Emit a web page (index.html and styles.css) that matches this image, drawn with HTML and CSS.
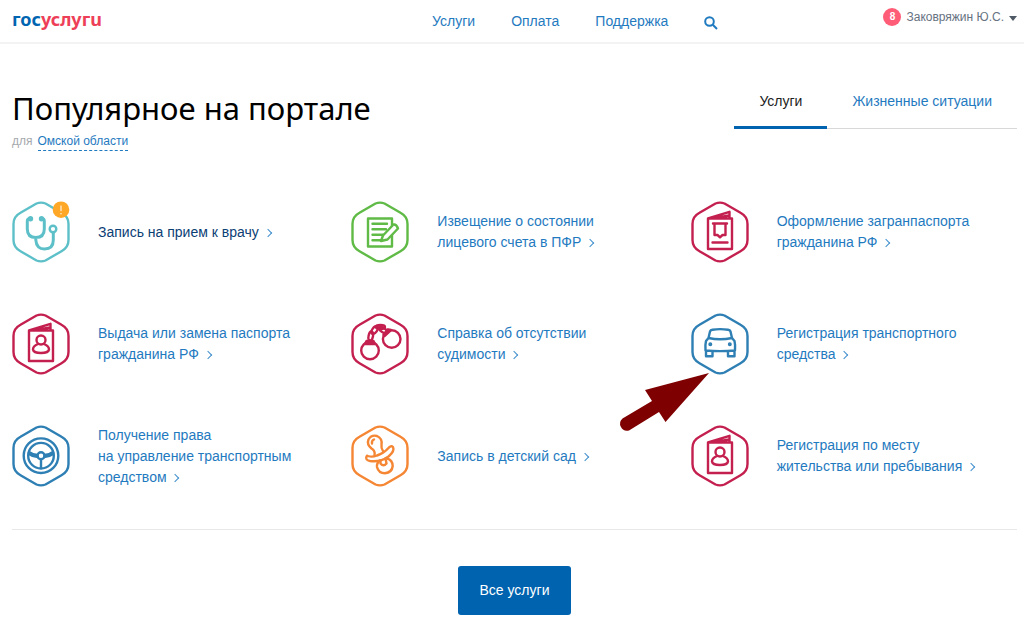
FILE: index.html
```html
<!DOCTYPE html>
<html lang="ru">
<head>
<meta charset="utf-8">
<title>Госуслуги</title>
<link rel="stylesheet" href="styles.css">
</head>
<body>
<svg class="sprite" aria-hidden="true">
  <symbol id="hex" viewBox="0 0 58 62">
    <path d="M24.500 2.500Q29 .7 33.500 2.500L49.500 11.800Q56.500 15.500 56.500 23V39Q56.500 46.500 49.500 50.200L33.500 59.500Q29 61.300 24.500 59.500L8.500 50.200Q1.500 46.500 1.500 39V23Q1.500 15.500 8.500 11.800Z"/>
  </symbol>
  <symbol id="passport" viewBox="0 0 58 62">
    <path d="M17 17.500H41V48H17ZM17 17.500L38.500 10.800V17.500M27 16.500L38 14.500"/>
    <circle cx="29" cy="27" r="4.500"/>
    <path d="M26 31Q21 33 21 36.500Q21.500 40 29 40Q36.500 40 37 36.500Q37 33 32 31"/>
  </symbol>
</svg>

<header class="header">
  <a class="logo" href="#" aria-label="Госуслуги"><span class="logo-blue">гос</span><span class="logo-red">услугu</span></a>
  <nav class="nav">
    <a href="#">Услуги</a>
    <a href="#">Оплата</a>
    <a href="#">Поддержка</a>
    <button class="search" type="button" aria-label="Поиск">
      <svg viewBox="0 0 14 14" width="14" height="14"><circle cx="5.500" cy="5.500" r="4.300"/><path d="M8.800 8.800L13 13"/></svg>
    </button>
  </nav>
  <button class="user" type="button"><span class="count">8</span><span>Заковряжин Ю.С.</span><span class="caret"></span></button>
</header>

<main class="main">
  <div class="top">
    <div>
      <h1>Популярное на портале</h1>
      <p class="region">для <a href="#">Омской области</a></p>
    </div>
    <div class="tabs">
      <button class="tab tab-active" type="button">Услуги</button>
      <button class="tab" type="button">Жизненные ситуации</button>
    </div>
  </div>

  <div class="services">
    <a class="service service-hover" href="#">
      <svg class="icon teal" viewBox="0 0 58 62"><use href="#hex"/>
        <path class="thick" d="M18.500 17.500Q15.300 17.500 15.300 20V28Q15.300 36.500 23.800 36.500Q32.300 36.500 32.300 28V20Q32.300 17.500 29.500 17.500M23.800 36.500V39Q24.500 48 32.500 48Q41.300 48 41.300 39V32"/>
        <circle class="solid" cx="18.500" cy="17.700" r="1.500"/><circle class="solid" cx="29.500" cy="17.700" r="1.500"/>
        <circle cx="41" cy="28" r="3.300"/>
        <circle class="alert" cx="49" cy="8.700" r="8.300"/><path class="mark" d="M49 4.500V10.200M49 12V13.400"/>
      </svg>
      <span>Запись на прием к врачу <i class="arrow"></i></span>
    </a>
    <a class="service" href="#">
      <svg class="icon green" viewBox="0 0 58 62"><use href="#hex"/>
        <path d="M17 17.500H41V45.500H17ZM21.500 22.800H36M21.500 28.200H35M21.500 33.700H32M21.500 39.200H30"/>
        <path class="paper" d="M30 40L32 34.500L42.500 23.500Q45.500 23 47 27.500L36.500 38.500Z"/>
      </svg>
      <span>Извещение о состоянии<br>лицевого счета в ПФР <i class="arrow"></i></span>
    </a>
    <a class="service" href="#">
      <svg class="icon crimson" viewBox="0 0 58 62"><use href="#hex"/>
        <path d="M17 17.500H41V48H17ZM17 17.500L38.500 10.800V17.500M27 16.500L38 14.500M22 22.500H36M23.500 23V34H26.500L29 36.300L31.500 34H34.500V23M21.500 41.500H36.500"/>
      </svg>
      <span>Оформление загранпаспорта<br>гражданина РФ <i class="arrow"></i></span>
    </a>
    <a class="service" href="#">
      <svg class="icon crimson" viewBox="0 0 58 62"><use href="#hex"/><use href="#passport"/></svg>
      <span>Выдача или замена паспорта<br>гражданина РФ <i class="arrow"></i></span>
    </a>
    <a class="service" href="#">
      <svg class="icon crimson" viewBox="0 0 58 62"><use href="#hex"/>
        <circle cx="19" cy="37.500" r="8.800"/><circle cx="40.700" cy="26" r="8.800"/>
        <path class="solid" d="M15.500 28H22.500L24 31H14ZM32.500 21.500L37 16.300L40 17L33.500 23Z"/>
        <ellipse cx="19.800" cy="23" rx="2.200" ry="4.500" transform="rotate(12 19.800 23)"/>
        <ellipse cx="23.700" cy="17" rx="2.400" ry="4.500" transform="rotate(35 23.700 17)"/>
        <ellipse cx="29.500" cy="14" rx="4.500" ry="2"/>
        <ellipse cx="32" cy="17" rx="2.200" ry="4.300" transform="rotate(-55 32 17)"/>
      </svg>
      <span>Справка об отсутствии<br>судимости <i class="arrow"></i></span>
    </a>
    <a class="service" href="#">
      <svg class="icon blue" viewBox="0 0 58 62"><use href="#hex"/>
        <path d="M17.500 25L19 18.500Q19.500 17 21.500 16.700Q29 15.500 37 16.700Q39 17 39.500 18.500L41 25M17.500 25Q29 27.500 41 25L43.500 28Q44.500 32 44 37.500Q29 38.800 14.500 37.500Q14 32 15 28ZM15 38V43.200H21.500V38.500M37 38.500V43.200H43.500V38"/>
        <circle class="solid" cx="19.300" cy="31.200" r=".8"/><circle class="solid" cx="38.800" cy="31.200" r=".8"/>
      </svg>
      <span>Регистрация транспортного<br>средства <i class="arrow"></i></span>
      <svg class="pointer" viewBox="0 0 92 62" width="92" height="62" aria-hidden="true">
        <path d="M91 1L27 18L34 29L4.500 46.500A7 7 0 0 0 11 58.500L41 40L47.500 50Z"/>
      </svg>
    </a>
    <a class="service" href="#">
      <svg class="icon blue" viewBox="0 0 58 62"><use href="#hex"/>
        <circle cx="29" cy="30.700" r="17.300"/><circle cx="29" cy="30.700" r="12.800"/><circle cx="29" cy="30.700" r="3.500"/>
        <path d="M17 27Q21 30 25.500 30M41 27Q37 30 32.500 30M17 29Q21 32 25.800 32M41 29Q37 32 32.200 32M29 34.500V43"/>
      </svg>
      <span>Получение права<br>на управление транспортным<br>средством <i class="arrow"></i></span>
    </a>
    <a class="service" href="#">
      <svg class="icon orange" viewBox="0 0 58 62"><use href="#hex"/>
        <path d="M23.500 30Q24.500 26 20.500 23.500Q15.500 19.500 17.500 14.500Q20.500 9.500 26 11Q31.500 13.500 30.500 19.500Q30 23.500 32 26M21 18.500Q20.500 15.500 23 14.500"/>
        <path d="M17 31Q21 32.500 26 30.500Q33 28 37 23.500Q40 20 42 22Q44 26 37.500 31.500Q29 37.500 19 36Q14 35 15.500 31.500Q16 30.500 17 31Z"/>
        <path d="M29.500 36V38.500Q32.500 42 35.500 38.500L34.500 33.500"/>
        <path d="M29 35.500Q25.500 38 26 42Q27.500 48.200 34 48.200Q41 47.500 41.700 41Q41.500 35 36 33.500"/>
      </svg>
      <span>Запись в детский сад <i class="arrow"></i></span>
    </a>
    <a class="service" href="#">
      <svg class="icon crimson" viewBox="0 0 58 62"><use href="#hex"/><use href="#passport"/></svg>
      <span>Регистрация по месту<br>жительства или пребывания <i class="arrow"></i></span>
    </a>
  </div>

  <div class="more"><button class="all" type="button">Все услуги</button></div>
</main>
</body>
</html>
```
FILE: styles.css
```css
* { box-sizing: border-box; }
body {
  margin: 0;
  background: #fff;
  color: #000;
  font: 14px/21px "Liberation Sans", Arial, sans-serif;
}
a { color: #1f7ac0; text-decoration: none; }
button { font: inherit; border: 0; padding: 0; background: none; cursor: pointer; }
svg { fill: none; stroke: currentColor; }
.sprite { display: none; }

.header {
  display: grid;
  grid-template-columns: 7fr auto 5fr;
  align-items: start;
  height: 44px;
  padding: 0 7px 0 12px;
  border-bottom: 2px solid #f3f3f3;
}
.logo { padding-top: 7px; font: bold 18px/24px "Noto Sans", sans-serif; }
.logo-blue { color: #0065b1; }
.logo-red { color: #ee3f58; }
.nav { display: flex; gap: 36px; padding: 11px 0 0 2px; }
.search { display: flex; align-items: center; height: 24px; color: #1f7ac0; }
.search svg { stroke-width: 2; }
.user {
  display: flex;
  align-items: center;
  justify-self: end;
  gap: 5px;
  padding-top: 7px;
  color: #66727f;
  font-size: 12px;
  line-height: 20px;
}
.count {
  width: 18px;
  height: 18px;
  border-radius: 50%;
  background: #ff5c77;
  color: #fff;
  font-size: 10px;
  font-weight: bold;
  line-height: 18px;
  text-align: center;
}
.caret {
  margin-top: 3px;
  border: solid transparent;
  border-width: 5px 4px 0;
  border-top-color: #4f5a66;
}

.main { padding: 44px 7px 28px 12px; }
.top { display: flex; justify-content: space-between; align-items: start; }
h1 { margin: 0; font: 31px/40px "Noto Sans", sans-serif; }
.region { display: flex; gap: 5px; margin: 5px 0 0; color: #a5a9ad; font-size: 12px; line-height: 17px; }
.region a { border-bottom: 1px dashed #1f7ac0; }
.tabs { display: flex; border-bottom: 1px solid #d8d8d8; }
.tab { height: 40px; padding: 0 25px 14px; color: #1f7ac0; }
.tab-active { margin-bottom: -1px; height: 41px; padding-bottom: 12px; border-bottom: 3px solid #0063b0; color: #222; }

.services {
  display: grid;
  grid-template-columns: repeat(3, 1fr);
  grid-auto-rows: 112px;
  column-gap: 13px;
  padding: 25px 0 17px;
  border-bottom: 1px solid #e8e8e8;
}
.service { position: relative; display: flex; align-items: center; gap: 28px; }
.service-hover { color: #0b4075; }
.icon { flex: none; width: 58px; height: 62px; stroke-width: 2.4; stroke-linejoin: round; stroke-linecap: round; }
.teal { color: #5dc0c9; }
.green { color: #5fba46; }
.crimson { color: #c4204f; }
.blue { color: #2e7fb4; }
.orange { color: #f58634; }
.thick { stroke-width: 3; }
.solid { fill: currentColor; }
.paper { fill: #fff; }
.alert { fill: #ffa726; stroke: none; }
.mark { stroke: #fff; stroke-width: 1; stroke-linecap: butt; }
.arrow {
  display: inline-block;
  width: 6px;
  height: 6px;
  margin: 0 0 1px 2px;
  border: solid #3f8fcc;
  border-width: 1px 1px 0 0;
  transform: rotate(45deg);
}
.pointer { position: absolute; left: -73px; top: 84px; z-index: 1; pointer-events: none; fill: #7f0000; stroke: none; }

.more { display: flex; justify-content: center; padding-top: 36px; }
.all { height: 49px; padding: 0 22px; border-radius: 3px; background: #0063b0; color: #fff; }
```
